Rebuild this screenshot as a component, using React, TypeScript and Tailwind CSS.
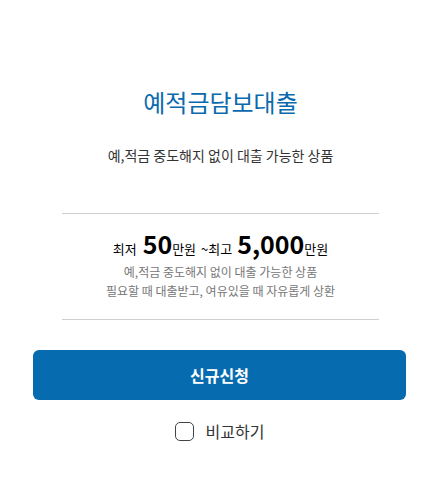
import React from 'react';

const App: React.FC = () => {
  return (
    <div className="w-[441px] h-[485px] bg-white font-['Noto_Sans_CJK_KR','Noto_Sans',sans-serif]">
      <div className="flex flex-col items-center pt-[84px]">
        <h1 className="text-[24px] leading-[36px] text-[#0b6aad] font-normal">예적금담보대출</h1>
        <p className="mt-[25px] text-[14px] leading-[20px] text-[#333]">예,적금 중도해지 없이 대출 가능한 상품</p>
      </div>

      <div className="mx-[62px] mt-[48px] border-t border-[#cfcfcf]">
        <div className="flex flex-col items-center pt-[13px] pb-[19px]">
          <div className="flex items-baseline text-black">
            <span className="text-[13px] mr-[6px]">최저</span>
            <span className="text-[25px] leading-[32px] font-bold">50</span>
            <span className="text-[13px]">만원</span>
            <span className="text-[13px] ml-[5px]">~최고</span>
            <span className="text-[25px] leading-[32px] font-bold ml-[5px]">5,000</span>
            <span className="text-[13px]">만원</span>
          </div>
          <p className="text-[12px] leading-[19px] text-[#777] text-center mt-[3px]">
            예,적금 중도해지 없이 대출 가능한 상품
            <br />
            필요할 때 대출받고, 여유있을 때 자유롭게 상환
          </p>
        </div>
      </div>

      <div className="mx-[62px] border-t border-[#cfcfcf]" />

      <div className="pl-[33px] pr-[35px] pt-[30px]">
        <button className="w-full h-[50px] rounded-[6px] bg-[#066caf] text-white text-[16px] font-bold">
          신규신청
        </button>
        <label className="flex items-center justify-center mt-[20px] gap-[12px]">
          <span className="w-[19px] h-[19px] rounded-[5px] border-[1.5px] border-[#444] bg-white" />
          <span className="text-[16px] leading-[22px] text-[#333]">비교하기</span>
        </label>
      </div>
    </div>
  );
};

export default App;
